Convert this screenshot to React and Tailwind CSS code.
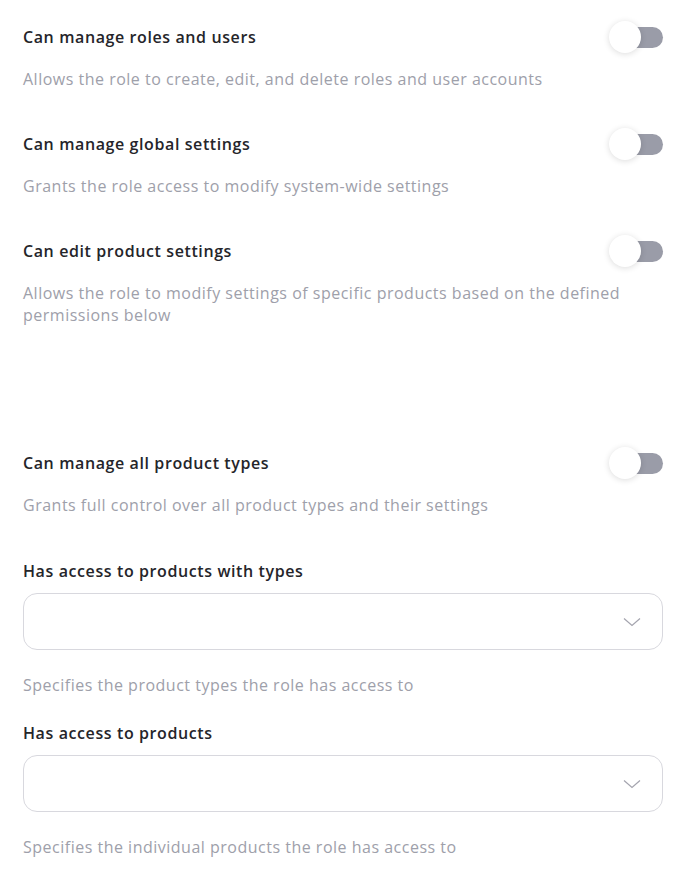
import { useState } from 'react'

function Toggle({ on, onChange }) {
  return (
    <button
      onClick={onChange}
      className="relative w-[54px] h-[32px] flex items-center shrink-0"
    >
      <span className={`absolute right-0 w-[51px] h-[21px] rounded-full ${on ? 'bg-[#4f46e5]' : 'bg-[#9a9ca8]'}`} />
      <span
        className={`absolute top-0 w-[32px] h-[32px] rounded-full bg-white shadow-[0_1px_6px_rgba(0,0,0,0.14)] ${on ? 'left-[22px]' : 'left-0'}`}
      />
    </button>
  )
}

function ToggleItem({ title, desc }) {
  const [on, setOn] = useState(false)
  return (
    <div>
      <div className="flex items-center justify-between h-[32px]">
        <span className="text-[16px] font-semibold tracking-[0.6px] text-[#25252a]">{title}</span>
        <Toggle on={on} onChange={() => setOn(!on)} />
      </div>
      <p className="mt-[15px] text-[16px] leading-[22px] tracking-[0.5px] text-[#9ea0aa]">{desc}</p>
    </div>
  )
}

function SelectItem({ title, desc }) {
  return (
    <div>
      <div className="text-[16px] leading-[24px] font-semibold tracking-[0.6px] text-[#25252a]">{title}</div>
      <button className="mt-[10px] w-full h-[57px] rounded-[14px] border border-[#d8d8de] bg-white flex items-center justify-end pr-[21px]">
        <svg width="18" height="10" viewBox="0 0 18 10" fill="none">
          <path d="M1 1.5L9 8.5L17 1.5" stroke="#a4a4ae" strokeWidth="1.2" />
        </svg>
      </button>
      <p className="mt-[24px] text-[16px] leading-[22px] tracking-[0.5px] text-[#9ea0aa]">{desc}</p>
    </div>
  )
}

export default function App() {
  return (
    <div className="min-h-screen bg-white px-[23px] pt-[21px]" style={{ fontFamily: '"Open Sans", "Noto Sans", sans-serif' }}>
      <div className="w-[640px]">
        <ToggleItem title="Can manage roles and users" desc="Allows the role to create, edit, and delete roles and user accounts" />
        <div className="h-[38px]" />
        <ToggleItem title="Can manage global settings" desc="Grants the role access to modify system-wide settings" />
        <div className="h-[38px]" />
        <ToggleItem title="Can edit product settings" desc="Allows the role to modify settings of specific products based on the defined permissions below" />
        <div className="h-[121px]" />
        <ToggleItem title="Can manage all product types" desc="Grants full control over all product types and their settings" />
        <div className="h-[43px]" />
        <SelectItem title="Has access to products with types" desc="Specifies the product types the role has access to" />
        <div className="h-[25px]" />
        <SelectItem title="Has access to products" desc="Specifies the individual products the role has access to" />
      </div>
    </div>
  )
}
